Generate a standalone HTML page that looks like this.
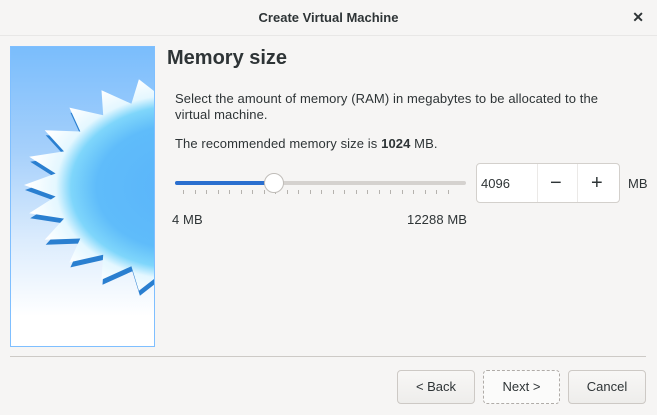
<!DOCTYPE html>
<html><head><meta charset="utf-8"><style>
*{margin:0;padding:0;box-sizing:border-box}
body{width:657px;height:415px;background:#f6f5f4;font-family:"Liberation Sans",sans-serif;color:#2e3436;position:relative;overflow:hidden}
.hdr{position:absolute;left:0;top:0;width:657px;height:36px;background:#f6f5f4;border-bottom:1px solid #e8e7e6}
.hdr .t{position:absolute;left:0;right:0;top:10px;text-align:center;font-weight:bold;font-size:13px}
.hdr .x{position:absolute;right:13px;top:9px;font-size:14px;font-weight:bold}
.panel{position:absolute;left:10px;top:46px;width:145px;height:301px;border:1px solid #7fbfff;overflow:hidden;background:linear-gradient(#7abdfc 0%,#a6d0fb 35%,#dcecfd 65%,#fff 90%)}
.a{position:absolute;font-size:13px;letter-spacing:0.1px}
.track{position:absolute;left:175px;top:181px;width:291px;height:4px;border-radius:2px;background:#d5d2cf}
.fill{position:absolute;left:175px;top:181px;width:99px;height:4px;border-radius:2px;background:#2a6fcf}
.knob{position:absolute;left:264px;top:173px;width:20px;height:20px;border-radius:50%;background:#fff;border:1px solid #c0bdb9}
.tick{position:absolute;top:190px;width:1px;height:4px;background:#b5b2ae}
.spin{position:absolute;left:476px;top:163px;width:144px;height:40px;border:1px solid #d3d0cc;border-radius:4px;background:#fff}
.spin .v{position:absolute;left:4px;top:12px;font-size:13px}
.spin .m{position:absolute;left:60px;top:0;width:1px;height:38px;background:#ebe9e7}
.spin .n{position:absolute;left:100px;top:0;width:1px;height:38px;background:#ebe9e7}
.sep{position:absolute;left:10px;top:356px;width:636px;height:1px;background:#cdcac6}
.btn{position:absolute;top:370px;height:34px;border:1px solid #cdc9c5;border-radius:4px;background:linear-gradient(#f8f7f6,#eeedeb);font-size:13px;text-align:center;line-height:32px}
</style></head><body>
<div class="hdr"><div class="t">Create Virtual Machine</div><div class="x">✕</div></div>
<div class="panel"><svg width="145" height="301" id="sv">
<defs><radialGradient id="g" cx="168" cy="140" r="150" gradientUnits="userSpaceOnUse" gradientTransform="translate(0,35) scale(1,0.75)">
<stop offset="0" stop-color="#5ab4fb"/><stop offset="0.55" stop-color="#5fbcfa"/><stop offset="0.72" stop-color="#7fd6fb"/><stop offset="0.82" stop-color="#e4f7ff"/><stop offset="1" stop-color="#fff"/></radialGradient></defs>
<polygon id="s2" fill="#2a7fd0"/><polygon id="s1" fill="url(#g)"/></svg></div>
<script>
var p1=[],p2=[];for(var i=0;i<48;i++){var a=i*Math.PI/24,r=i%2?122:152;var x=178+r*Math.cos(a)*1.02,y=184+r*Math.sin(a)*0.72;p1.push((x-10).toFixed(1)+','+(y-46).toFixed(1));p2.push((x-9).toFixed(1)+','+(y-41).toFixed(1));}
document.getElementById('s1').setAttribute('points',p1.join(' '));document.getElementById('s2').setAttribute('points',p2.join(' '));
</script>
<div class="a" style="left:167px;top:47px;font-size:20px;font-weight:bold;letter-spacing:0">Memory size</div>
<div class="a" style="left:175px;top:91px;line-height:16px">Select the amount of memory (RAM) in megabytes to be allocated to the<br>virtual machine.</div>
<div class="a" style="left:175px;top:136px">The recommended memory size is <b>1024</b> MB.</div>
<div class="track"></div><div class="fill"></div>
<div id="ticks"></div>
<script>var h='';for(var i=0;i<24;i++){h+='<div class="tick" style="left:'+(183+i*11.5).toFixed(0)+'px"></div>'}document.getElementById('ticks').innerHTML=h;</script>
<div class="knob"></div>
<div class="spin"><div class="v">4096</div><div class="m"></div><div class="n"></div>
<div style="position:absolute;left:73px;top:8px;font-size:20px">−</div>
<div style="position:absolute;left:114px;top:8px;font-size:20px">+</div></div>
<div class="a" style="left:628px;top:176px">MB</div>
<div class="a" style="left:172px;top:212px">4 MB</div>
<div class="a" style="left:407px;top:212px">12288 MB</div>
<div class="sep"></div>
<div class="btn" style="left:397px;width:78px">&lt; Back</div>
<div class="btn" style="left:483px;width:77px;border:1px dashed #b0aca8;background:#fbfbfa">Next &gt;</div>
<div class="btn" style="left:568px;width:78px">Cancel</div>
</body></html>
